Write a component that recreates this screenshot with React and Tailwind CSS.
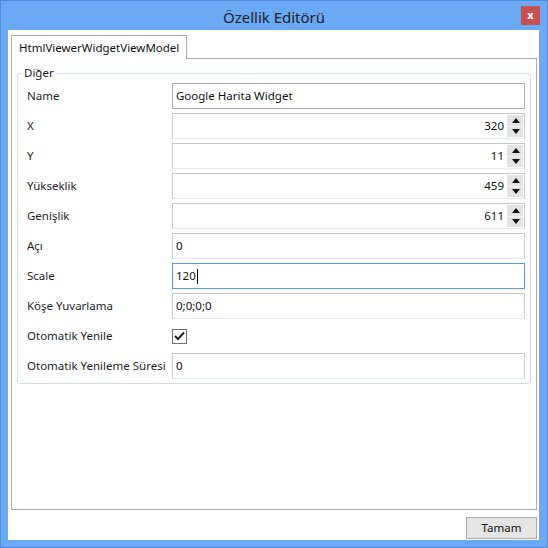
import React from "react";

const font = { fontFamily: '"Noto Sans", "Open Sans", sans-serif' };

function Spinner() {
  return (
    <div className="flex flex-col w-[16px] h-full border-l border-[#e3e3e3]">
      <div className="flex-1 flex items-center justify-center bg-[#e3e3e3] border-b border-[#f4f4f4]">
        <svg width="8" height="5" viewBox="0 0 8 5"><path d="M0 5 L4 0 L8 5Z" fill="#111" /></svg>
      </div>
      <div className="flex-1 flex items-center justify-center bg-[#e3e3e3]">
        <svg width="8" height="5" viewBox="0 0 8 5"><path d="M0 0 L4 5 L8 0Z" fill="#111" /></svg>
      </div>
    </div>
  );
}

function Row({ label, children }) {
  return (
    <div className="flex items-center h-[30px]">
      <div className="w-[149px] pl-[4px] text-[11.5px] text-[#1e1e1e] whitespace-nowrap">{label}</div>
      <div className="flex-1 flex items-center">{children}</div>
    </div>
  );
}

function TextBox({ value, focused, dark }) {
  return (
    <div
      className={
        "h-[26px] w-full flex items-center px-[3px] text-[11.5px] text-[#111] bg-white border " +
        (focused ? "border-[#569de5]" : dark ? "border-[#abadb3]" : "border-[#c8c8c8] border-b-[#e3e9ef]")
      }
    >
      {value}
      {focused && <span className="inline-block w-px h-[15px] bg-black ml-[1px]" />}
    </div>
  );
}

function NumBox({ value }) {
  return (
    <div className="h-[26px] w-full flex items-stretch bg-white border border-[#c8c8c8] border-b-[#e3e9ef]">
      <div className="flex-1 flex items-center justify-end pr-[3px] text-[11.5px] text-[#111]">{value}</div>
      <div className="py-[1px] pr-[1px] flex">
        <Spinner />
      </div>
    </div>
  );
}

export default function App() {
  return (
    <div className="w-[548px] h-[548px] bg-white" style={font}>
      <div className="w-[548px] h-[548px] bg-[#6aa9f3] border border-[#4f8fd8] flex flex-col">
        <div className="h-[29px] flex items-center relative">
          <div className="flex-1 text-center text-[15px] text-[#1e1e1e] pt-[3px]">Özellik Editörü</div>
          <div className="absolute right-[7px] top-[5px] w-[19px] h-[19px] bg-[#c75050] flex items-center justify-center">
            <span className="text-white text-[11px] font-bold leading-none -mt-[2px]">x</span>
          </div>
        </div>
        <div className="w-[531px] h-[510px] ml-[7px] bg-white flex flex-col pl-[3px] pr-[2px] pt-[4px]">
          <div className="flex">
            <div className="h-[24px] px-[7px] border border-b-0 border-[#acacac] flex items-center text-[11.5px] text-[#111] bg-white relative top-px z-10">
              HtmlViewerWidgetViewModel
            </div>
          </div>
          <div className="h-[452px] border border-[#acacac] px-[5px] pt-[14px]">
            <div className="relative border border-[#d5dfe5] rounded-[3px] px-[5px] pt-[7px] pb-[2px]">
              <div className="absolute left-[4px] -top-[9px] bg-white px-[2px] text-[11.5px] text-[#1e1e1e] leading-[16px]">Diğer</div>
              <Row label="Name"><TextBox value="Google Harita Widget" dark /></Row>
              <Row label="X"><NumBox value="320" /></Row>
              <Row label="Y"><NumBox value="11" /></Row>
              <Row label="Yükseklik"><NumBox value="459" /></Row>
              <Row label="Genişlik"><NumBox value="611" /></Row>
              <Row label="Açı"><TextBox value="0" /></Row>
              <Row label="Scale"><TextBox value="120" focused /></Row>
              <Row label="Köşe Yuvarlama"><TextBox value="0;0;0;0" /></Row>
              <Row label="Otomatik Yenile">
                <div className="w-[15px] h-[15px] border border-[#707070] bg-white flex items-center justify-center">
                  <svg width="11" height="10" viewBox="0 0 11 10"><path d="M1 5 L4 8 L10 1.5" stroke="#222" strokeWidth="2" fill="none" /></svg>
                </div>
              </Row>
              <Row label="Otomatik Yenileme Süresi"><TextBox value="0" /></Row>
            </div>
          </div>
          <div className="flex justify-end mt-[7px]">
            <div className="w-[71px] h-[22px] bg-[#e5e5e5] border border-[#acacac] flex items-center justify-center text-[11.5px] text-[#111]">Tamam</div>
          </div>
        </div>
      </div>
    </div>
  );
}
